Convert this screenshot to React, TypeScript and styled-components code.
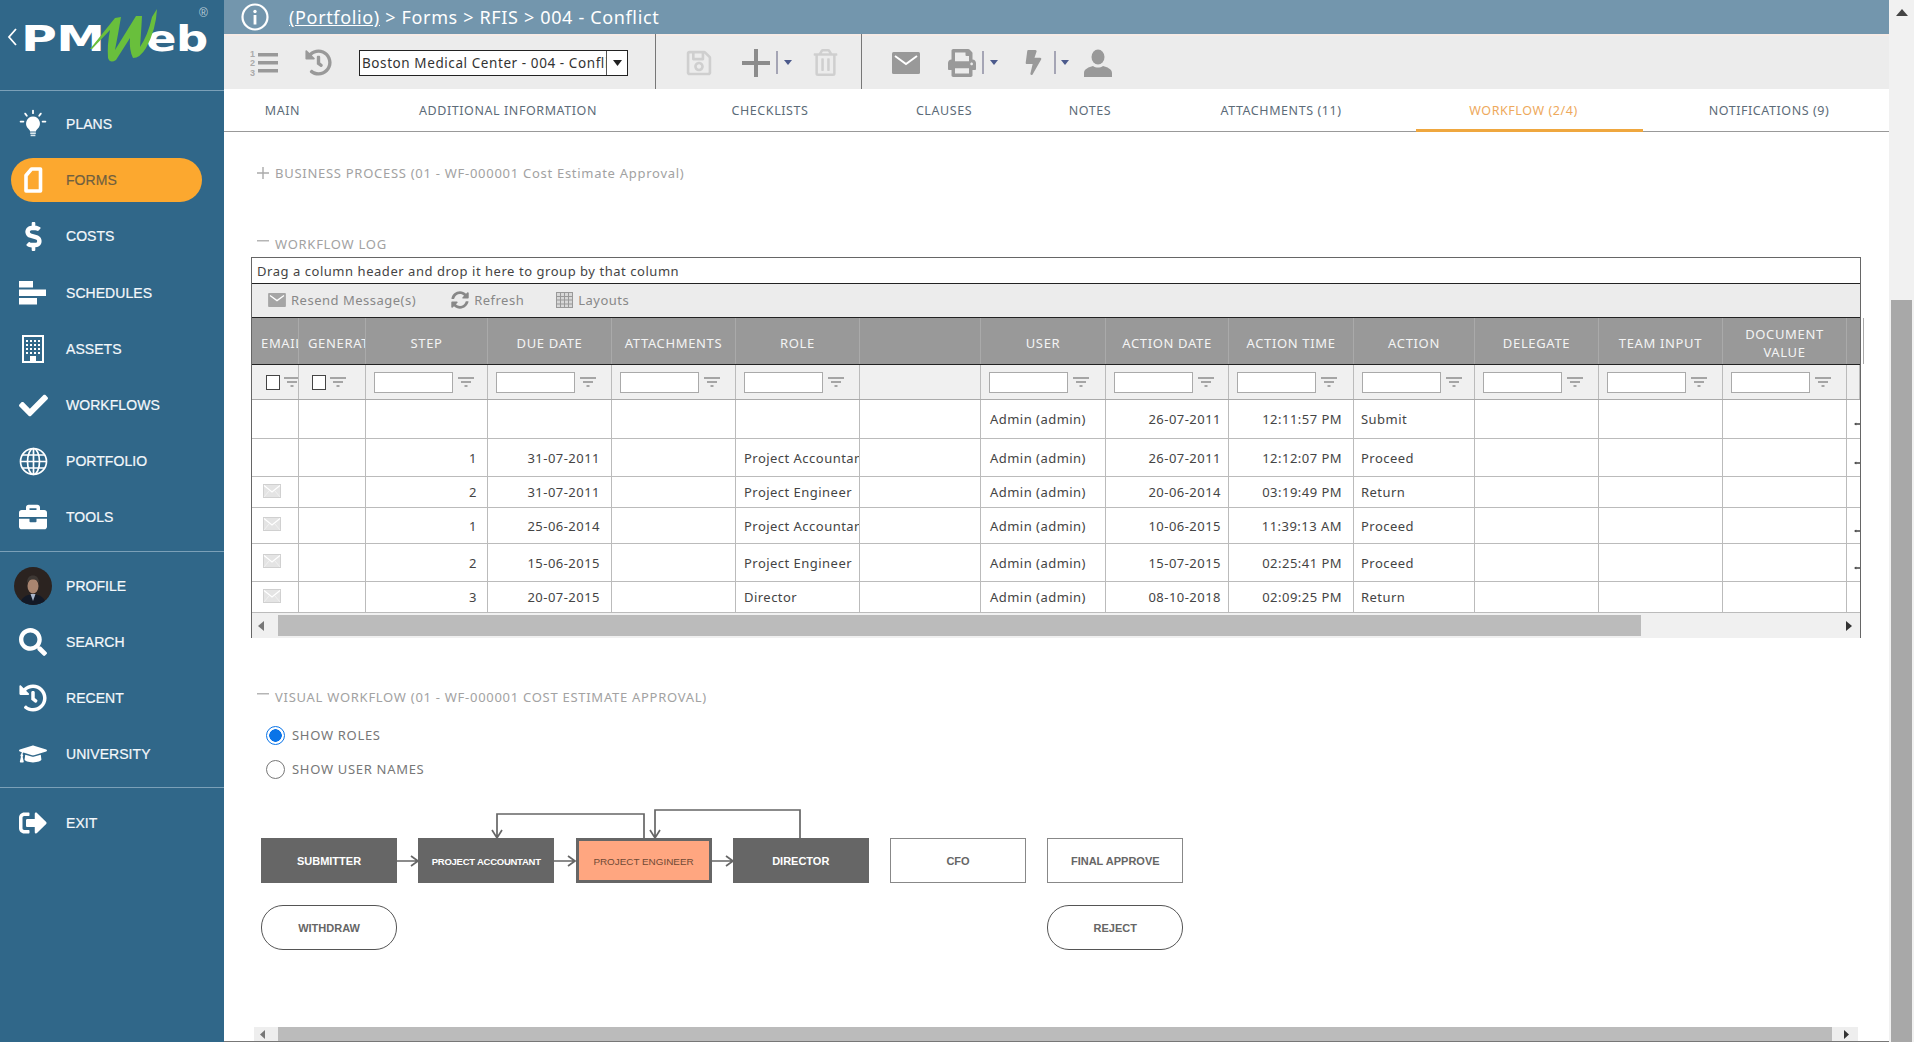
import React from "react";
import styled, { createGlobalStyle } from "styled-components";
import {
  FaBolt, FaBriefcase, FaCheck, FaDollarSign, FaGraduationCap, FaHistory,
  FaPrint, FaRegSave, FaRegTrashAlt, FaSearch, FaSignOutAlt, FaSyncAlt,
} from "react-icons/fa";

const Global = createGlobalStyle`
  html, body { margin: 0; padding: 0; height: 100%; overflow: hidden; background: #fff; }
  body { font-family: "Noto Sans", "Liberation Sans", sans-serif; }
  #root { height: 100%; }
  * { box-sizing: border-box; }
`;

const Shell = styled.div`
  display: grid;
  grid-template-columns: 224px 1fr 25px;
  height: 1042px;
  width: 1914px;
`;

/* ---------- sidebar ---------- */
const Sidebar = styled.aside`
  background: #306789;
  display: flex;
  flex-direction: column;
  color: #f4f8fb;
`;
const LogoBlock = styled.div`
  position: relative;
  height: 91px;
  border-bottom: 1px solid #7ba0b8;
  flex: none;
`;
const LogoChevron = styled.svg`
  position: absolute;
  left: 7px;
  top: 28px;
`;
const LogoWord = styled.span<{ $left: number; $stretch: number }>`
  position: absolute;
  left: ${(p) => p.$left}px;
  top: 16px;
  font-family: "DejaVu Sans", sans-serif;
  font-weight: 700;
  font-size: 36px;
  line-height: 46px;
  letter-spacing: -0.5px;
  color: #fff;
  transform: scaleX(${(p) => p.$stretch});
  transform-origin: left center;
`;
const LogoMark = styled.svg`
  position: absolute;
  left: 0;
  top: 0;
`;
const LogoReg = styled.span`
  position: absolute;
  left: 199px;
  top: 6px;
  font: 12px "Liberation Sans", sans-serif;
  color: #b9ccd8;
`;
const NavGroup = styled.nav<{ $top: number; $bottom: number }>`
  padding: ${(p) => p.$top}px 0 ${(p) => p.$bottom}px;
  border-bottom: ${(p) => (p.$bottom ? "1px solid #7ba0b8" : "none")};
`;
const NavItem = styled.div`
  height: 56.2px;
  display: flex;
  align-items: center;
`;
const NavPill = styled.div<{ $active?: boolean }>`
  height: 44px;
  width: 191px;
  margin-left: 11px;
  padding-left: 3px;
  border-radius: 22px;
  display: flex;
  align-items: center;
  gap: 14px;
  background: ${(p) => (p.$active ? "#fca82f" : "transparent")};
`;
const NavIcon = styled.span`
  width: 38px;
  height: 38px;
  display: flex;
  align-items: center;
  justify-content: center;
  flex: none;
  color: #fff;
`;
const NavLabel = styled.span<{ $active?: boolean }>`
  font: 14px "Liberation Sans", sans-serif;
  letter-spacing: 0.05px;
  color: ${(p) => (p.$active ? "#705f3f" : "#f4f8fb")};
  -webkit-text-stroke: 0.2px currentColor;
`;

/* ---------- main ---------- */
const Main = styled.main`
  display: flex;
  flex-direction: column;
  min-width: 0;
  height: 1042px;
  border-bottom: 1px solid #777;
`;
const Crumbs = styled.header`
  height: 34px;
  background: #7396ad;
  display: flex;
  align-items: center;
  padding-left: 17px;
  color: #fff;
  flex: none;
`;
const CrumbText = styled.div`
  margin-left: 20px;
  font-size: 18px;
  letter-spacing: 0.65px;
  white-space: pre;
`;
const CrumbLink = styled.span`
  text-decoration: underline;
`;
const Toolbar = styled.div`
  height: 55px;
  flex: none;
  background: #ececec;
  border-top: 2px solid #f6ebe6;
  display: flex;
  align-items: center;
  color: #999;
`;
const ToolIcon = styled.span<{ $left: number; $color?: string }>`
  display: flex;
  align-items: center;
  justify-content: center;
  flex: none;
  margin-left: ${(p) => p.$left}px;
  color: ${(p) => p.$color || "#999"};
`;
const SelectBox = styled.div`
  margin-left: 27px;
  width: 269px;
  height: 26px;
  border: 1px solid #222;
  background: #fff;
  display: flex;
  align-items: center;
  font-size: 13.5px;
  letter-spacing: 0.58px;
  color: #333;
  flex: none;
`;
const SelectText = styled.span`
  flex: 1;
  padding-left: 2px;
  overflow: hidden;
  white-space: nowrap;
  border-right: 1px solid #555;
  line-height: 24px;
  min-width: 0;
`;
const SelectCaret = styled.span`
  width: 20px;
  display: flex;
  justify-content: center;
  flex: none;
`;
const ToolRule = styled.span<{ $left: number }>`
  width: 1px;
  align-self: stretch;
  margin: -2px 0 0 ${(p) => p.$left}px;
  background: #777;
  flex: none;
`;
const MiniRule = styled.span<{ $left: number }>`
  width: 2px;
  height: 23px;
  margin-left: ${(p) => p.$left}px;
  background: #a5a5b5;
  flex: none;
`;
const Caret = styled.svg<{ $left: number }>`
  margin-left: ${(p) => p.$left}px;
  flex: none;
`;

const Tabs = styled.div`
  height: 43px;
  flex: none;
  display: flex;
  border-bottom: 1px solid #999;
`;
const Tab = styled.div<{ $w: number; $active?: boolean; $gap?: number; $left?: number; $right?: number }>`
  width: ${(p) => p.$w}px;
  margin-left: ${(p) => p.$gap || 0}px;
  padding: 0 ${(p) => p.$right || 0}px 0 ${(p) => p.$left || 0}px;
  flex: none;
  height: 43px;
  display: flex;
  align-items: center;
  justify-content: center;
  font-size: 12.5px;
  letter-spacing: 0.57px;
  white-space: nowrap;
  color: ${(p) => (p.$active ? "#eea95c" : "#5c6b78")};
  box-shadow: ${(p) => (p.$active ? "inset 0 -3px 0 #efa73f" : "none")};
`;

const Content = styled.section`
  flex: 1;
  min-height: 0;
  padding: 31px 28px 0 27px;
  display: flex;
  flex-direction: column;
`;
const SectionHead = styled.div<{ $top: number }>`
  margin-top: ${(p) => p.$top}px;
  height: 20px;
  flex: none;
  display: flex;
  align-items: center;
  font-size: 13px;
  letter-spacing: 0.72px;
  color: #a2a2a2;
  padding-left: 6px;
  white-space: nowrap;
`;
const HeadMark = styled.svg`
  flex: none;
  margin-right: 6px;
`;

/* ---------- data grid ---------- */
const COLS = "47px 67px 122px 124px 124px 124px 121px 125px 123px 125px 121px 124px 124px 124px 13px";

const GridFrame = styled.div`
  margin-top: 3px;
  width: 1610px;
  height: 381px;
  flex: none;
  border: 1px solid #666;
  display: flex;
  flex-direction: column;
`;
const GroupBar = styled.div`
  height: 26px;
  flex: none;
  border-bottom: 1px solid #222;
  padding-left: 5px;
  display: flex;
  align-items: center;
  font-size: 13px;
  letter-spacing: 0.54px;
  color: #444;
`;
const GridTools = styled.div`
  height: 34px;
  flex: none;
  background: #ececec;
  border-bottom: 1px solid #222;
  display: flex;
  align-items: center;
  padding: 0 0 1px 16px;
  color: #888;
  font-size: 13px;
  letter-spacing: 0.5px;
`;
const GridTool = styled.span<{ $left?: number }>`
  display: flex;
  align-items: center;
  gap: 5px;
  margin-left: ${(p) => p.$left || 0}px;
`;
const HeadRow = styled.div`
  display: grid;
  grid-template-columns: ${COLS};
  height: 47px;
  flex: none;
  background: #999;
  border-bottom: 1px solid #222;
`;
const HeadCell = styled.div<{ $left?: boolean }>`
  border-right: 1px solid #aaa;
  color: #f4f4f4;
  font-size: 13px;
  letter-spacing: 0.65px;
  line-height: 18px;
  display: flex;
  align-items: center;
  justify-content: ${(p) => (p.$left ? "flex-start" : "center")};
  padding: ${(p) => (p.$left ? "3px 0 0 9px" : "3px 8px 0")};
  text-align: center;
  overflow: hidden;
  white-space: ${(p) => (p.$left ? "nowrap" : "normal")};
`;
const FilterRow = styled.div`
  display: grid;
  grid-template-columns: ${COLS};
  height: 35px;
  flex: none;
  background: #f0f0f0;
  border-bottom: 1px solid #aaa;
`;
const FilterCell = styled.div<{ $pad?: number }>`
  border-right: 1px solid #bbb;
  display: flex;
  align-items: center;
  padding-left: ${(p) => p.$pad ?? 8}px;
  gap: 4px;
  overflow: hidden;
`;
const FilterInput = styled.span`
  width: 79px;
  height: 21px;
  background: #fff;
  border: 1px solid #aaa;
  margin-right: 1px;
  flex: none;
`;
const FilterCheck = styled.span`
  width: 14px;
  height: 15px;
  background: #fff;
  border: 1px solid #444;
  flex: none;
`;
const DataRow = styled.div<{ $h: number }>`
  display: grid;
  grid-template-columns: ${COLS};
  height: ${(p) => p.$h}px;
  flex: none;
  border-bottom: 1px solid #bbb;
`;
const DataCell = styled.div<{ $align?: "r" | "l"; $last?: boolean; $pad?: number }>`
  border-right: ${(p) => (p.$last ? "none" : "1px solid #bbb")};
  display: flex;
  align-items: center;
  justify-content: ${(p) => (p.$align === "r" ? "flex-end" : "flex-start")};
  padding: ${(p) =>
    p.$last ? "10px 0 0 7px" : p.$align === "r" ? `0 ${p.$pad ?? 10}px 0 0` : `0 0 0 ${p.$pad ?? 9}px`};
  font-size: 13px;
  letter-spacing: 0.47px;
  color: #444;
  white-space: nowrap;
  overflow: hidden;
`;
const GridScroll = styled.div`
  flex: 1;
  display: flex;
  align-items: center;
  background: #f0f0f0;
  padding: 2px 0 2px 0;
`;
const ScrollThumb = styled.div`
  background: #bbb;
  height: 21px;
  width: 1363px;
  margin-left: 14px;
  flex: none;
`;
const ScrollArrow = styled.svg<{ $left: number }>`
  flex: none;
  margin-left: ${(p) => p.$left}px;
`;

/* ---------- visual workflow ---------- */
const RadioList = styled.div`
  margin-top: 16px;
  display: flex;
  flex-direction: column;
  gap: 10px;
  padding-left: 15px;
  flex: none;
`;
const RadioRow = styled.div`
  display: flex;
  align-items: center;
  height: 24px;
  gap: 7px;
  font-size: 13px;
  letter-spacing: 0.7px;
  color: #777;
`;
const RadioDot = styled.span<{ $on?: boolean }>`
  width: 19px;
  height: 19px;
  border-radius: 50%;
  flex: none;
  background: ${(p) => (p.$on ? "radial-gradient(circle, #0a74e8 0 6px, #fff 6.5px)" : "#fff")};
  border: 1.5px solid ${(p) => (p.$on ? "#0a74e8" : "#777")};
`;
const Diagram = styled.div`
  position: relative;
  margin: 28px 0 0 10px;
  padding-top: 29px;
  display: grid;
  grid-template-columns: repeat(6, 136px);
  grid-template-rows: 45px 45px;
  column-gap: 21.25px;
  row-gap: 22px;
  flex: none;
`;
const Wires = styled.svg`
  position: absolute;
  left: 0;
  top: 0;
  pointer-events: none;
`;
const Node = styled.div<{ $kind: "dark" | "hot" | "open" | "pill"; $small?: boolean; $col?: number }>`
  grid-column: ${(p) => p.$col || "auto"};
  display: flex;
  align-items: center;
  justify-content: center;
  padding-top: 1px;
  font-family: "Liberation Sans", sans-serif;
  font-weight: ${(p) => (p.$kind === "hot" ? 400 : 700)};
  font-size: ${(p) => (p.$small ? "9.5px" : p.$kind === "hot" ? "9.9px" : "11px")};
  letter-spacing: ${(p) => (p.$small ? "-0.25px" : "0")};
  white-space: nowrap;
  background: ${(p) => (p.$kind === "dark" ? "#666" : p.$kind === "hot" ? "#ffa680" : "#fff")};
  color: ${(p) => (p.$kind === "dark" ? "#fff" : p.$kind === "hot" ? "#704a36" : "#666")};
  border: ${(p) =>
    p.$kind === "hot" ? "3px solid #666" : p.$kind === "dark" ? "none" : "1.5px solid #888"};
  border-radius: ${(p) => (p.$kind === "pill" ? "22px" : "0")};
  ${(p) => (p.$kind === "pill" ? "border-color:#555;" : "")}
`;
const BottomBar = styled.div`
  margin: auto 0 0 3px;
  width: 1604px;
  height: 14px;
  flex: none;
  background: #eee;
  display: flex;
  align-items: center;
`;
const BottomThumb = styled.div`
  width: 1554px;
  height: 14px;
  margin-left: 13px;
  background: #bbb;
  flex: none;
`;

/* ---------- page scrollbar ---------- */
const PageScroll = styled.div`
  background: #f1f1f1;
  display: flex;
  flex-direction: column;
  align-items: center;
  height: 1042px;
`;
const PageThumb = styled.div`
  margin-top: 284px;
  width: 21px;
  flex: 1;
  background: #a8a8a8;
`;
const PageArrow = styled.svg`
  margin-top: 9px;
  flex: none;
`;

/* ---------- drawn icons ---------- */
const BulbIcon = () => (
  <svg width="30" height="30" viewBox="0 0 30 30" fill="#fff">
    <path d="M15 7.500a7 7 0 0 0-4.400 12.400c1 .9 1.400 1.600 1.500 2.600h5.800c.1-1 .5-1.700 1.500-2.600A7 7 0 0 0 15 7.500z" />
    <rect x="12.200" y="23.400" width="5.600" height="1.600" fill="#dbe8ee" />
    <rect x="12.600" y="25.600" width="4.800" height="1.600" fill="#dbe8ee" />
    <g stroke="#fff" strokeWidth="1.800" strokeLinecap="round">
      <path d="M15 1.600v2.600M7.200 4.600l1.600 2.200M22.800 4.600l-1.600 2.200M2.600 12.600h2.800M24.600 12.600h2.800" />
    </g>
  </svg>
);
const FormIcon = () => (
  <svg width="20" height="28" viewBox="0 0 20 28">
    <path d="M8.500 3H17.500v22H3V9.500z" fill="none" stroke="#fff" strokeWidth="3.600" strokeLinejoin="round" />
  </svg>
);
const BarsIcon = () => (
  <svg width="28" height="24" viewBox="0 0 28 24" fill="#fff">
    <rect x="0" y="0" width="14" height="6.500" />
    <rect x="0" y="8.500" width="27" height="6.500" />
    <rect x="0" y="17" width="18" height="6.500" />
  </svg>
);
const BuildingIcon = () => (
  <svg width="22" height="28" viewBox="0 0 22 28">
    <rect x="1" y="1" width="20" height="26" fill="none" stroke="#fff" strokeWidth="2" />
    <g fill="#fff">
      {[5, 9, 13, 17].flatMap((x) =>
        [5, 9, 13, 17].map((y) => <rect key={`${x}-${y}`} x={x - 1} y={y} width="2" height="2" />),
      )}
      <rect x="8" y="21" width="6" height="6" />
    </g>
  </svg>
);
const GlobeIcon = () => (
  <svg width="29" height="29" viewBox="0 0 29 29" fill="none" stroke="#fff" strokeWidth="1.700">
    <circle cx="14.500" cy="14.500" r="13" />
    <ellipse cx="14.500" cy="14.500" rx="6" ry="13" />
    <path d="M14.500 1.500v26M1.500 14.500h26M3.500 8h22M3.500 21h22" />
  </svg>
);
const Avatar = () => (
  <svg width="38" height="38" viewBox="0 0 38 38">
    <defs>
      <clipPath id="avatarClip">
        <circle cx="19" cy="19" r="19" />
      </clipPath>
    </defs>
    <g clipPath="url(#avatarClip)">
      <rect width="38" height="38" fill="#2b2320" />
      <path d="M6 38c1-8 6-10 13-11 7 1 12 3 13 11z" fill="#131926" />
      <path d="M16.500 27l2.500 7 2.500-7z" fill="#a9b6cc" />
      <ellipse cx="19" cy="19" rx="5.500" ry="7.500" fill="#a98570" />
      <path d="M13 17c-.5-6 2.500-8.500 6-8.500s6.500 2.500 6 8.500c-1-3.500-3-4.500-6-4.500s-5 1-6 4.500z" fill="#3e3834" />
    </g>
  </svg>
);
const InfoIcon = () => (
  <svg width="28" height="28" viewBox="0 0 28 28">
    <circle cx="14" cy="14" r="12.500" fill="none" stroke="#fff" strokeWidth="2.200" />
    <circle cx="14" cy="8.500" r="1.700" fill="#fff" />
    <rect x="12.600" y="12" width="2.800" height="9.500" fill="#fff" />
  </svg>
);
const NumberedList = () => (
  <svg width="28" height="28" viewBox="0 0 28 28">
    <g fill="#999">
      <rect x="8" y="4" width="20" height="3.500" />
      <rect x="8" y="12" width="20" height="3.500" />
      <rect x="8" y="20" width="20" height="3.500" />
    </g>
    <g fill="#aaa" fontSize="9" fontWeight="700" fontFamily="Liberation Sans, sans-serif">
      <text x="0" y="8">1</text>
      <text x="0" y="17">2</text>
      <text x="0" y="27">3</text>
    </g>
  </svg>
);
const PlusIcon = () => (
  <svg width="28" height="28" viewBox="0 0 28 28" fill="#8c8c8c">
    <rect x="0" y="12" width="28" height="4" />
    <rect x="12" y="0" width="4" height="28" />
  </svg>
);
const PersonIcon = () => (
  <svg width="28" height="28" viewBox="0 0 28 28" fill="#999">
    <ellipse cx="14" cy="8" rx="6.500" ry="7.500" />
    <path d="M0 28v-4c0-4 5-6 9-7 3 2 7 2 10 0 4 1 9 3 9 7v4z" />
  </svg>
);
const MailSolid = ({ w, h, fill }: { w: number; h: number; fill: string }) => (
  <svg width={w} height={h} viewBox="0 0 28 22">
    <rect width="28" height="22" rx="1.500" fill={fill} />
    <path d="M3 4l11 8 11-8" fill="none" stroke="#fff" strokeWidth="2" />
  </svg>
);
const MailLight = () => (
  <svg width="18" height="14" viewBox="0 0 18 14" style={{ marginTop: -3 }}>
    <rect x="0.500" y="0.500" width="17" height="13" fill="#e4e4e4" stroke="#d0d0d0" />
    <path d="M1 1.500l8 6.500 8-6.500" fill="none" stroke="#fff" strokeWidth="1.200" />
    <path d="M1 13l5-6M17 13l-5-6" stroke="#f4f4f4" strokeWidth="0.800" />
  </svg>
);
const LayoutGlyph = () => (
  <svg width="17" height="16" viewBox="0 0 17 16" fill="#d8d8d8" stroke="#999" strokeWidth="1">
    <rect x="0.500" y="0.500" width="16" height="15" />
    <path d="M0.500 4.500h16M0.500 8h16M0.500 12h16M4.500 0.500v15M8.500 0.500v15M12.500 0.500v15" fill="none" />
  </svg>
);
const FilterMark = () => (
  <svg width="16" height="12" viewBox="0 0 16 12" style={{ flex: "none" }}>
    <rect x="0" y="1" width="16" height="2" fill="#a5a5a5" />
    <rect x="3" y="5" width="10" height="2" fill="#a5a5a5" />
    <rect x="6.500" y="9" width="3" height="2" fill="#a5a5a5" />
  </svg>
);
const SmallCaret = ({ left }: { left: number }) => (
  <Caret $left={left} width="8" height="5" viewBox="0 0 8 5">
    <path d="M0 0h8L4 5z" fill="#4c5a8c" />
  </Caret>
);
const Stub = () => (
  <svg width="8" height="4" viewBox="0 0 8 4">
    <path d="M0 2L3 0v1h5v2H3v1z" fill="#444" />
  </svg>
);

/* ---------- data ---------- */
const NAV_A: [string, React.ReactNode][] = [
  ["PLANS", <BulbIcon key="b" />],
  ["FORMS", <FormIcon key="f" />],
  ["COSTS", <FaDollarSign key="c" size={29} />],
  ["SCHEDULES", <BarsIcon key="s" />],
  ["ASSETS", <BuildingIcon key="a" />],
  ["WORKFLOWS", <FaCheck key="w" size={29} />],
  ["PORTFOLIO", <GlobeIcon key="p" />],
  ["TOOLS", <FaBriefcase key="t" size={28} />],
];
const NAV_B: [string, React.ReactNode][] = [
  ["PROFILE", <Avatar key="p" />],
  ["SEARCH", <FaSearch key="s" size={28} />],
  ["RECENT", <FaHistory key="r" size={28} />],
  ["UNIVERSITY", <FaGraduationCap key="u" size={28} />],
];

const HEADERS = [
  "EMAIL", "GENERATE", "STEP", "DUE DATE", "ATTACHMENTS", "ROLE", "", "USER", "ACTION DATE",
  "ACTION TIME", "ACTION", "DELEGATE", "TEAM INPUT", "DOCUMENT VALUE", "",
];

type Row = {
  h: number; mail?: boolean; step: string; due: string; role: string;
  date: string; time: string; action: string; stub?: boolean;
};
const ROWS: Row[] = [
  { h: 39, step: "", due: "", role: "", date: "26-07-2011", time: "12:11:57 PM", action: "Submit", stub: true },
  { h: 38, step: "1", due: "31-07-2011", role: "Project Accountant", date: "26-07-2011", time: "12:12:07 PM", action: "Proceed", stub: true },
  { h: 31, mail: true, step: "2", due: "31-07-2011", role: "Project Engineer", date: "20-06-2014", time: "03:19:49 PM", action: "Return" },
  { h: 36, mail: true, step: "1", due: "25-06-2014", role: "Project Accountant", date: "10-06-2015", time: "11:39:13 AM", action: "Proceed", stub: true },
  { h: 38, mail: true, step: "2", due: "15-06-2015", role: "Project Engineer", date: "15-07-2015", time: "02:25:41 PM", action: "Proceed", stub: true },
  { h: 31, mail: true, step: "3", due: "20-07-2015", role: "Director", date: "08-10-2018", time: "02:09:25 PM", action: "Return" },
];

const Minus = () => (
  <HeadMark width="12" height="12" viewBox="0 0 12 12">
    <rect x="0" y="2" width="12" height="1.500" fill="#b5b5b5" />
  </HeadMark>
);

export default function App() {
  return (
    <>
      <Global />
      <Shell>
        <Sidebar>
          <LogoBlock>
            <LogoChevron width="10" height="18" viewBox="0 0 10 18">
              <path d="M9 1L2 9l7 8" fill="none" stroke="#fff" strokeWidth="1.800" />
            </LogoChevron>
            <LogoWord $left={21} $stretch={1.36}>PM</LogoWord>
            <LogoWord $left={146} $stretch={1.25}>eb</LogoWord>
            <LogoMark width="224" height="90" viewBox="0 0 224 90">
              <path
                d="M90 49L115 18L121 17Q118 35 115 50L136 16L142 16Q141 35 140 47Q148 35 152 17L157 9Q156 30 146 48Q140 58 133 58Q129 50 130 38L116 60Q110 64 108 58Q107 45 110 30L92 49Z"
                fill="#69bf3c"
              />
            </LogoMark>
            <LogoReg>®</LogoReg>
          </LogoBlock>
          <NavGroup $top={5} $bottom={5}>
            {NAV_A.map(([label, icon]) => (
              <NavItem key={label}>
                <NavPill $active={label === "FORMS"}>
                  <NavIcon>{icon}</NavIcon>
                  <NavLabel $active={label === "FORMS"}>{label}</NavLabel>
                </NavPill>
              </NavItem>
            ))}
          </NavGroup>
          <NavGroup $top={6} $bottom={5}>
            {NAV_B.map(([label, icon]) => (
              <NavItem key={label}>
                <NavPill>
                  <NavIcon>{icon}</NavIcon>
                  <NavLabel>{label}</NavLabel>
                </NavPill>
              </NavItem>
            ))}
          </NavGroup>
          <NavGroup $top={7} $bottom={0}>
            <NavItem>
              <NavPill>
                <NavIcon><FaSignOutAlt size={28} /></NavIcon>
                <NavLabel>EXIT</NavLabel>
              </NavPill>
            </NavItem>
          </NavGroup>
        </Sidebar>

        <Main>
          <Crumbs>
            <InfoIcon />
            <CrumbText>
              <CrumbLink>(Portfolio)</CrumbLink>{" > Forms > RFIS > 004 - Conflict"}
            </CrumbText>
          </Crumbs>

          <Toolbar>
            <ToolIcon $left={26}><NumberedList /></ToolIcon>
            <ToolIcon $left={27}><FaHistory size={27} /></ToolIcon>
            <SelectBox>
              <SelectText>Boston Medical Center - 004 - Conflict</SelectText>
              <SelectCaret>
                <svg width="9" height="6" viewBox="0 0 9 6"><path d="M0 0h9L4.500 6z" fill="#222" /></svg>
              </SelectCaret>
            </SelectBox>
            <ToolRule $left={27} />
            <ToolIcon $left={29} $color="#cfcfcf"><FaRegSave size={28} /></ToolIcon>
            <ToolIcon $left={29}><PlusIcon /></ToolIcon>
            <MiniRule $left={6} />
            <SmallCaret left={6} />
            <ToolIcon $left={20} $color="#cfcfcf"><FaRegTrashAlt size={27} /></ToolIcon>
            <ToolRule $left={22} />
            <ToolIcon $left={30}><MailSolid w={28} h={22} fill="#999" /></ToolIcon>
            <ToolIcon $left={28}><FaPrint size={28} /></ToolIcon>
            <MiniRule $left={6} />
            <SmallCaret left={6} />
            <ToolIcon $left={23}><FaBolt size={25} /></ToolIcon>
            <MiniRule $left={8} />
            <SmallCaret left={5} />
            <ToolIcon $left={15}><PersonIcon /></ToolIcon>
          </Toolbar>

          <Tabs>
            <Tab $w={117}>MAIN</Tab>
            <Tab $w={334}>ADDITIONAL INFORMATION</Tab>
            <Tab $w={190}>CHECKLISTS</Tab>
            <Tab $w={158}>CLAUSES</Tab>
            <Tab $w={134}>NOTES</Tab>
            <Tab $w={248}>ATTACHMENTS (11)</Tab>
            <Tab $w={227} $gap={11} $right={12} $active>WORKFLOW (2/4)</Tab>
            <Tab $w={246} $left={6}>NOTIFICATIONS (9)</Tab>
          </Tabs>

          <Content>
            <SectionHead $top={0}>
              <HeadMark width="12" height="12" viewBox="0 0 12 12">
                <path d="M5.300 0h1.400v5.300H12v1.400H6.700V12H5.300V6.700H0V5.300h5.300z" fill="#aaa" />
              </HeadMark>
              BUSINESS PROCESS (01 - WF-000001 Cost Estimate Approval)
            </SectionHead>

            <SectionHead $top={51}>
              <Minus />
              WORKFLOW LOG
            </SectionHead>

            <GridFrame>
              <GroupBar>Drag a column header and drop it here to group by that column</GroupBar>
              <GridTools>
                <GridTool>
                  <MailSolid w={18} h={14} fill="#a5a5a5" />
                  Resend Message(s)
                </GridTool>
                <GridTool $left={35}>
                  <FaSyncAlt size={18} />
                  Refresh
                </GridTool>
                <GridTool $left={32}>
                  <LayoutGlyph />
                  Layouts
                </GridTool>
              </GridTools>
              <HeadRow>
                {HEADERS.map((h, i) => (
                  <HeadCell key={i} $left={i < 2}>{h}</HeadCell>
                ))}
              </HeadRow>
              <FilterRow>
                {HEADERS.map((h, i) =>
                  i < 2 ? (
                    <FilterCell key={i} $pad={14 - i}>
                      <FilterCheck />
                      <FilterMark />
                    </FilterCell>
                  ) : h === "" ? (
                    <FilterCell key={i} />
                  ) : (
                    <FilterCell key={i}>
                      <FilterInput />
                      <FilterMark />
                    </FilterCell>
                  ),
                )}
              </FilterRow>
              {ROWS.map((r, i) => (
                <DataRow key={i} $h={r.h}>
                  <DataCell $pad={11}>{r.mail && <MailLight />}</DataCell>
                  <DataCell />
                  <DataCell $align="r">{r.step}</DataCell>
                  <DataCell $align="r" $pad={11}>{r.due}</DataCell>
                  <DataCell />
                  <DataCell $pad={8}>{r.role}</DataCell>
                  <DataCell />
                  <DataCell>Admin (admin)</DataCell>
                  <DataCell $align="r" $pad={7}>{r.date}</DataCell>
                  <DataCell $align="r" $pad={11}>{r.time}</DataCell>
                  <DataCell $pad={7}>{r.action}</DataCell>
                  <DataCell />
                  <DataCell />
                  <DataCell />
                  <DataCell $last>{r.stub && <Stub />}</DataCell>
                </DataRow>
              ))}
              <GridScroll>
                <ScrollArrow $left={6} width="6" height="10" viewBox="0 0 6 10">
                  <path d="M6 0v10L0 5z" fill="#777" />
                </ScrollArrow>
                <ScrollThumb />
                <ScrollArrow $left={205} width="6" height="10" viewBox="0 0 6 10">
                  <path d="M0 0v10l6-5z" fill="#333" />
                </ScrollArrow>
              </GridScroll>
            </GridFrame>

            <SectionHead $top={49}>
              <Minus />
              VISUAL WORKFLOW (01 - WF-000001 COST ESTIMATE APPROVAL)
            </SectionHead>
            <RadioList>
              <RadioRow><RadioDot $on />SHOW ROLES</RadioRow>
              <RadioRow><RadioDot />SHOW USER NAMES</RadioRow>
            </RadioList>

            <Diagram>
              <Node $kind="dark">SUBMITTER</Node>
              <Node $kind="dark" $small>PROJECT ACCOUNTANT</Node>
              <Node $kind="hot">PROJECT ENGINEER</Node>
              <Node $kind="dark">DIRECTOR</Node>
              <Node $kind="open">CFO</Node>
              <Node $kind="open">FINAL APPROVE</Node>
              <Node $kind="pill" $col={1}>WITHDRAW</Node>
              <Node $kind="pill" $col={6}>REJECT</Node>
              <Wires width="930" height="80" viewBox="0 0 930 80" fill="none" stroke="#666" strokeWidth="1.700">
                <path d="M136 52h20M150 47l7 5-7 5" />
                <path d="M293 52h21M307 47l7 5-7 5" />
                <path d="M451 52h21M465 47l7 5-7 5" />
                <path d="M383 29V5H236v24M231 21l5 8 5-8" />
                <path d="M539 29V1H394v28M389 21l5 8 5-8" />
              </Wires>
            </Diagram>

            <BottomBar>
              <ScrollArrow $left={6} width="5" height="9" viewBox="0 0 5 9">
                <path d="M5 0v9L0 4.500z" fill="#777" />
              </ScrollArrow>
              <BottomThumb />
              <ScrollArrow $left={12} width="5" height="9" viewBox="0 0 5 9">
                <path d="M0 0v9l5-4.500z" fill="#333" />
              </ScrollArrow>
            </BottomBar>
          </Content>
        </Main>

        <PageScroll>
          <PageArrow width="12" height="7" viewBox="0 0 12 7">
            <path d="M0 7L6 0l6 7z" fill="#444" />
          </PageArrow>
          <PageThumb />
        </PageScroll>
      </Shell>
    </>
  );
}
